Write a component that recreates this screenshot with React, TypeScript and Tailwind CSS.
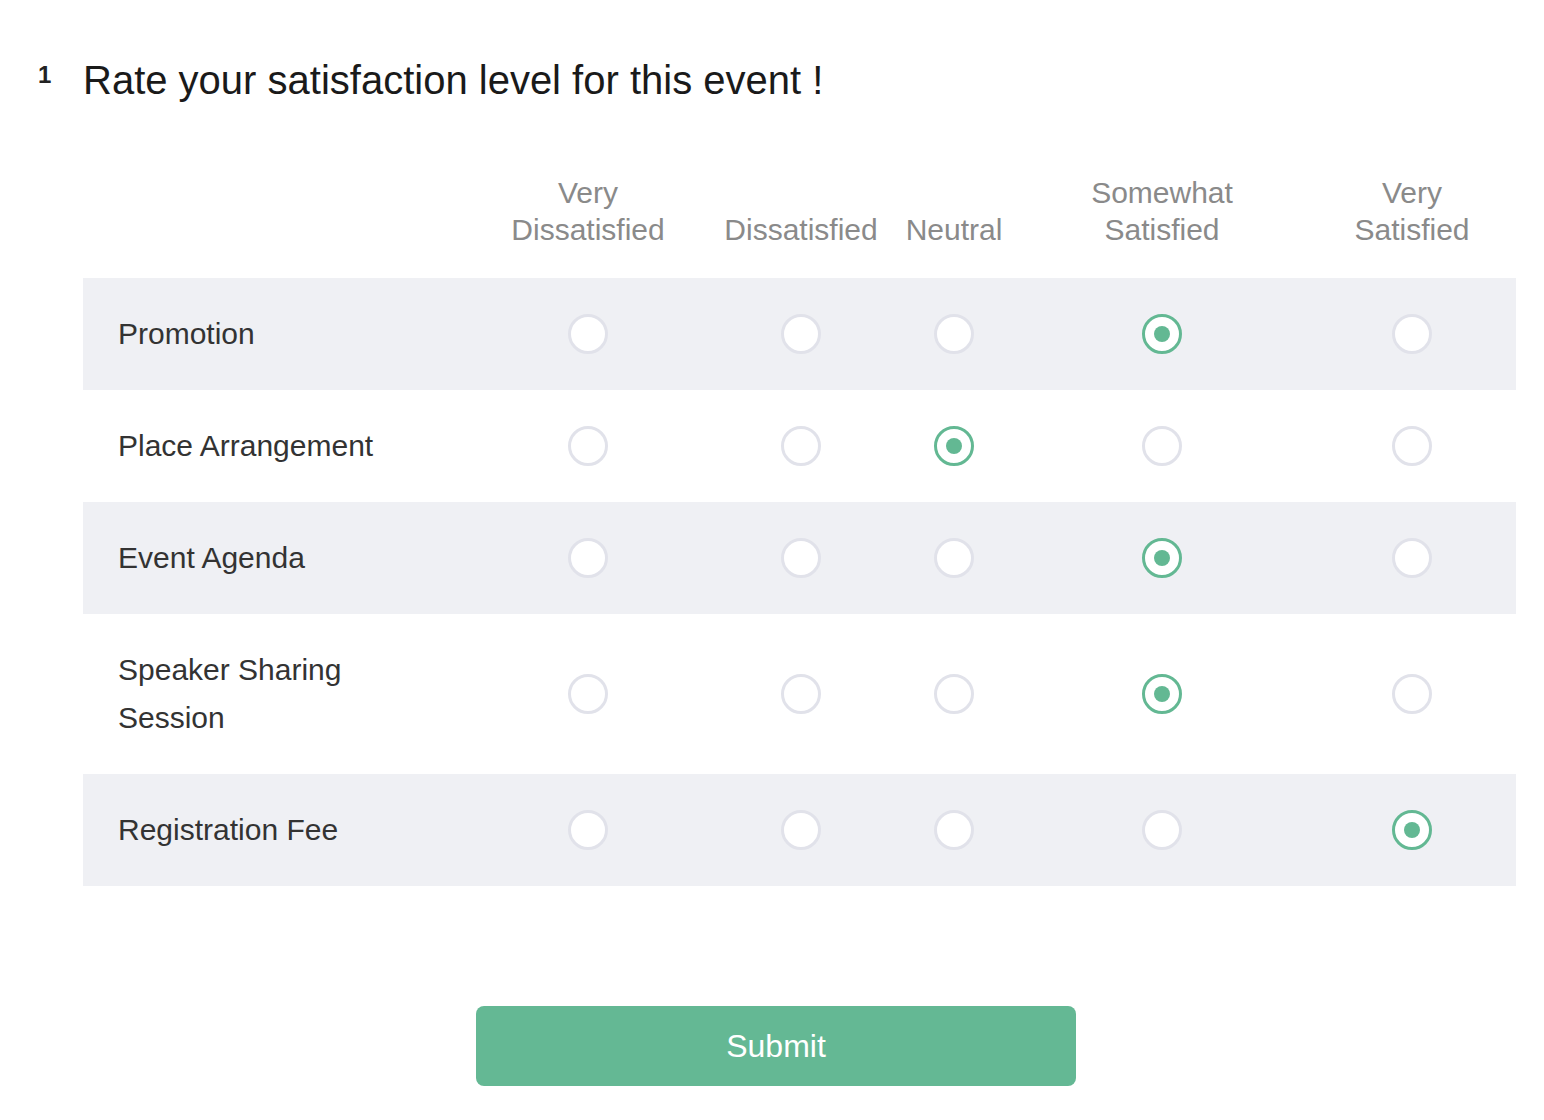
import React, { useState } from 'react'

const columns = [
  ['Very', 'Dissatisfied'],
  ['Dissatisfied'],
  ['Neutral'],
  ['Somewhat', 'Satisfied'],
  ['Very', 'Satisfied'],
]

const initialRows = [
  { label: ['Promotion'], value: 3 },
  { label: ['Place Arrangement'], value: 2 },
  { label: ['Event Agenda'], value: 3 },
  { label: ['Speaker Sharing', 'Session'], value: 3 },
  { label: ['Registration Fee'], value: 4 },
]

const grid = 'grid grid-cols-[383px_244px_182px_124px_292px_208px]'

function Radio({ checked, onClick }: { checked: boolean; onClick: () => void }) {
  return (
    <button
      onClick={onClick}
      className={`flex h-10 w-10 items-center justify-center rounded-full border-[3px] bg-white ${
        checked ? 'border-[#63b893]' : 'border-[#e1e2ea]'
      }`}
    >
      {checked && <span className="h-4 w-4 rounded-full bg-[#63b893]" />}
    </button>
  )
}

export default function App() {
  const [rows, setRows] = useState(initialRows)

  const pick = (r: number, c: number) => {
    setRows(rows.map((row, i) => (i === r ? { ...row, value: c } : row)))
  }

  return (
    <div className="min-h-[1120px] bg-white font-['Liberation_Sans',Arial,sans-serif]">
      <div className="flex pl-[38px] pt-[57px]">
        <span className="w-[45px] pt-[6px] text-[24px] leading-[24px] font-bold text-[#222]">1</span>
        <h1 className="text-[40px] leading-[46px] text-[#1a1a1a]">Rate your satisfaction level for this event !</h1>
      </div>

      <div className="ml-[83px] mt-[71px] w-[1433px]">
        <div className={`${grid} h-[104px] items-start`}>
          <div />
          {columns.map((col, i) => (
            <div
              key={i}
              className={`flex flex-col items-center text-[30px] leading-[37px] text-[#8a8a8a] ${
                col.length === 1 ? 'pt-[37px]' : ''
              }`}
            >
              {col.map((w) => (
                <span key={w}>{w}</span>
              ))}
            </div>
          ))}
        </div>

        {rows.map((row, r) => (
          <div
            key={r}
            className={`${grid} items-center ${row.label.length > 1 ? 'h-[160px]' : 'h-[112px]'} ${
              r % 2 === 0 ? 'bg-[#eff0f4]' : 'bg-white'
            }`}
          >
            <div className="flex flex-col pl-[35px] text-[30px] leading-[48px] text-[#333]">
              {row.label.map((l) => (
                <span key={l}>{l}</span>
              ))}
            </div>
            {columns.map((_, c) => (
              <div key={c} className="flex justify-center">
                <Radio checked={row.value === c} onClick={() => pick(r, c)} />
              </div>
            ))}
          </div>
        ))}
      </div>

      <div className="mt-[120px] flex justify-center pl-[8px]">
        <button className="h-[80px] w-[600px] rounded-lg bg-[#64b894] text-[32px] text-white">Submit</button>
      </div>
    </div>
  )
}
